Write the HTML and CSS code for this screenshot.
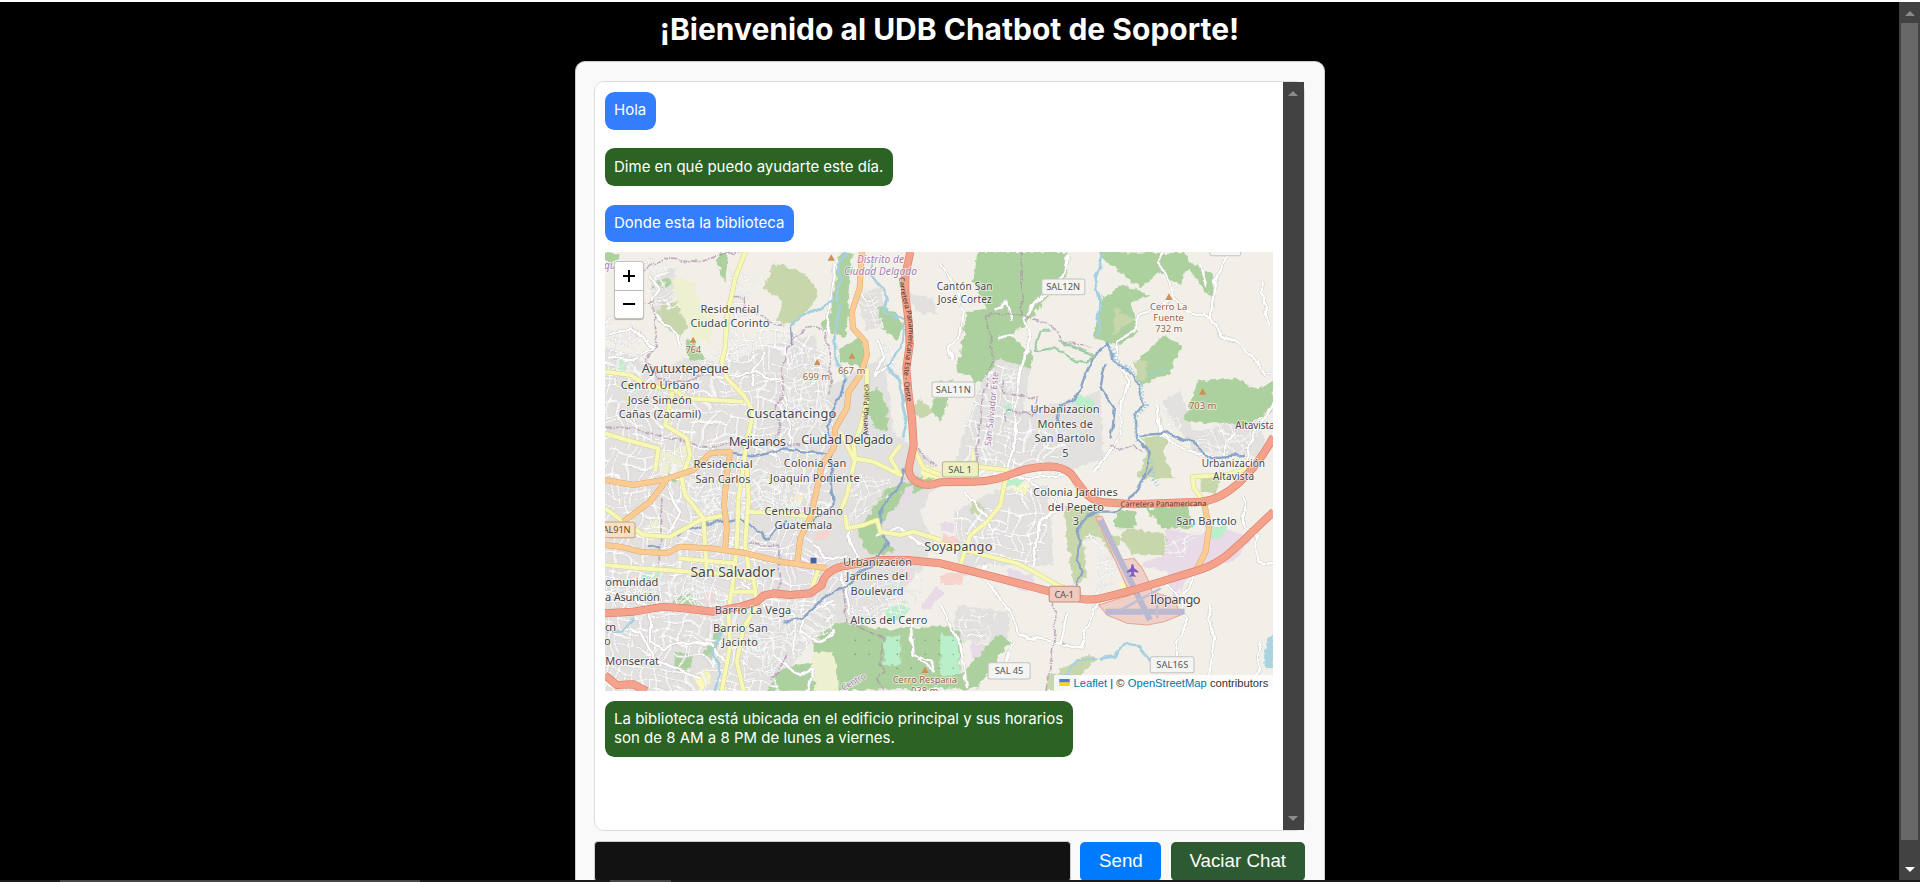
FILE: index.html
```
<!DOCTYPE html>
<html lang="es">
<head>
<meta charset="utf-8">
<title>UDB Chatbot de Soporte</title>
<link rel="stylesheet" href="styles.css">
</head>
<body>
<div class="screen">
<main class="page">
  <h1 class="title">¡Bienvenido al UDB Chatbot de Soporte!</h1>
  <section class="chat">
    <div class="chat-box">
      <div class="messages">
        <p class="bubble user">Hola</p>
        <p class="bubble bot">Dime en qué puedo ayudarte este día.</p>
        <p class="bubble user last">Donde esta la biblioteca</p>
        <div class="map">
          <svg class="tiles" viewBox="15 21 2004 1317" preserveAspectRatio="none">
            <defs>
              <filter id="warp" x="0" y="0" width="100%" height="100%"><feTurbulence type="fractalNoise" baseFrequency="0.009" numOctaves="2" seed="8"/><feDisplacementMap in="SourceGraphic" scale="90" xChannelSelector="R" yChannelSelector="G"/></filter>
              <filter id="edge" x="-5%" y="-5%" width="110%" height="110%"><feTurbulence type="fractalNoise" baseFrequency="0.05" numOctaves="2" seed="3"/><feDisplacementMap in="SourceGraphic" scale="22" xChannelSelector="R" yChannelSelector="G"/></filter>
              <filter id="wobble" x="-5%" y="-5%" width="110%" height="110%"><feTurbulence type="fractalNoise" baseFrequency="0.025" numOctaves="2" seed="5"/><feDisplacementMap in="SourceGraphic" scale="24" xChannelSelector="R" yChannelSelector="G"/></filter>
              <pattern id="grid" width="173" height="151" patternUnits="userSpaceOnUse" patternTransform="rotate(8)">
                <path d="M0 10H173M0 42H110M60 70H173M0 98H90M40 126H173M12 0V151M48 10V98M82 42V151M110 0V70M140 10V126M160 70V151M60 84H140M96 98V126M30 98V151M0 70H30" stroke="#c8c5c5" stroke-width="7.5" fill="none"/><path d="M0 10H173M0 42H110M60 70H173M0 98H90M40 126H173M12 0V151M48 10V98M82 42V151M110 0V70M140 10V126M160 70V151M60 84H140M96 98V126M30 98V151M0 70H30" stroke="#fff" stroke-width="4.8" fill="none"/>
              </pattern>
              <pattern id="fine" width="101" height="89" patternUnits="userSpaceOnUse" patternTransform="rotate(-17)"><path d="M0 8H101M0 22H60M0 36H101M30 52H101M0 66H70M8 0V89M34 8V66M60 22V89M84 0V52M22 66V89" stroke="#cbc9c8" stroke-width="5" fill="none"/><path d="M0 8H101M0 22H60M0 36H101M30 52H101M0 66H70M8 0V89M34 8V66M60 22V89M84 0V52M22 66V89" stroke="#fff" stroke-width="3.2" fill="none"/></pattern>
              <pattern id="trees" width="42" height="42" patternUnits="userSpaceOnUse"><circle cx="9" cy="10" r="2.5" fill="#6fa267"/></pattern>
              <path id="p1" d="M897 97C900 180 935 210 922 300S905 390 922 475"/>
              <path id="p2" d="M805 570C795 510 815 470 802 410"/>
            </defs>
            <rect class="land" x="0" y="0" width="2040" height="1360"/>
            <g filter="url(#edge)">
              <path class="urban" d="M0 300L110 340 180 380 250 340 370 360 500 300 640 270 700 420 850 330 880 560 990 640 1020 700 960 800 1000 900 960 980 840 1110 700 1140 620 1200 520 1338H0ZM150 110L230 60 215 170 170 210ZM1060 660L1140 420 1200 340 1290 370 1270 500 1500 440 1510 640 1400 680ZM1060 800L1180 740 1340 720 1360 960 1140 960 1080 1000ZM1680 470L1740 440 1780 560 1970 520 2000 640 1780 620ZM1070 1080L1230 1100 1220 1190 1060 1190ZM770 160L840 120 860 230 800 260ZM920 140L1000 160 1010 210 950 200Z"/>
              <path class="wood" d="M690 200L720 21 755 21 745 190 735 280 690 260 660 240ZM715 310L790 270 800 370 720 350ZM830 180L880 200 910 240 890 285 845 250ZM1130 21L1400 21 1400 90 1330 170 1290 215 1270 250 1230 270 1300 330 1290 375 1200 340 1140 415 1070 380 1080 320 1100 200 1160 190 1120 110ZM1490 21L1750 25 1780 60 1840 90 1835 165 1760 70 1740 120 1670 80 1620 130 1520 50ZM1500 160L1570 120 1650 150 1590 170 1610 260 1560 300 1480 280ZM1600 360L1690 270 1740 300 1710 380 1620 420ZM1750 530L1790 410 1900 400 1960 430 2019 410V490L1940 540ZM640 1180L700 1130 780 1140 880 1155 1020 1140 1080 1160 1080 1290 1190 1170 1230 1190 1130 1330 500 1338 540 1270 640 1250ZM830 420L865 500 860 560 820 540 790 480ZM850 740L1000 680 1020 690 880 790 830 850 880 920 810 930 770 860ZM1020 410L1060 405 1040 480 1020 530 990 500ZM360 21L385 21 375 110 350 60ZM195 95L215 110 200 130 150 130ZM1550 790L1610 800 1600 850 1540 850ZM1640 790L1760 780 1780 850 1680 850ZM250 285L290 300 320 345 270 350ZM195 630L240 640 230 710 190 700ZM220 1050L300 1045 290 1085 215 1085ZM220 1220L280 1230 260 1280 230 1290ZM370 1140L330 1180 310 1240 350 1260 360 1190ZM1800 880L1850 870 1850 940 1800 950ZM15 21L60 35 40 55 15 50Z"/>
              <path class="scrub" d="M520 55L580 70 640 110 650 165 580 240 530 230 550 170 490 130ZM180 180L245 165 270 230 240 280 165 220ZM1390 790L1500 780 1500 850 1560 880 1540 940 1500 880 1450 880 1460 1000 1420 1020 1400 900ZM1580 850L1700 870 1690 930 1600 930 1560 880ZM1620 580L1710 560 1690 620 1720 700 1610 700 1640 610ZM1340 1300L1460 1230 1490 1240 1400 1338H1340ZM1540 190L1600 220 1540 270ZM960 460L1000 500 960 520 930 500ZM1600 350L1640 350 1640 400 1610 410ZM1110 760L1160 790 1150 810 1110 800ZM1800 690L1860 700 1850 750 1800 740Z"/>
              <path class="pale" d="M220 95L280 110 300 180 350 200 330 300 280 280 240 200 220 150ZM640 1220L700 1225 720 1338H650L630 1270ZM130 850L180 820 190 860 150 890ZM175 620L260 600 260 690 180 690Z"/>
              <path class="industry" d="M1700 850L1780 870 1870 850 1950 880 1910 940 1780 980 1720 1060 1700 980 1620 960 1690 930ZM560 930L640 930 690 920 680 965 600 990 560 990ZM900 740L940 720 930 770 900 780ZM960 1090L1010 1020 1030 1040 990 1090ZM1220 970L1300 990 1290 1040 1220 1020ZM1110 1190L1160 1200 1130 1240 1110 1240ZM1020 830L1060 830 1060 860 1020 860Z"/>
              <path class="retail" d="M320 1035L350 1030 330 1080 310 1065ZM640 870L690 850 680 880 640 885ZM1020 990L1090 980 1080 1020 1020 1020ZM1030 870L1080 880 1070 920 1020 900Z"/>
              <path class="park" d="M120 990L180 980 170 1000 130 1010ZM1420 460L1440 450 1480 470 1480 500 1440 500ZM850 1100L920 1060 930 1100 880 1130ZM1220 690L1270 690 1260 720 1220 720ZM1830 850L1880 840 1860 880 1830 880ZM1020 1160L1070 1180 1080 1290 1020 1290ZM850 1180L900 1170 900 1260 850 1260ZM1215 480L1240 470 1230 510 1215 510ZM55 350L75 350 75 375 55 375Z"/>
              <path class="lemon" d="M570 760L610 750 600 780 570 790ZM300 520L330 530 310 550ZM1110 600L1130 640 1110 660ZM1240 720L1290 720 1270 750 1240 740ZM280 1300L320 1270 330 1310 300 1338ZM950 650L1010 670 1020 700 970 700ZM1550 1020L1590 1000 1580 1030Z"/>
              <path class="water" d="M2019 1170L2000 1180 1990 1240 2000 1270 2019 1260Z"/>
            </g>
            <path d="M730 1150H820V1240H730ZM850 1180H1060V1290H850Z" fill="url(#trees)"/>
            <g filter="url(#warp)">
              <path fill="url(#grid)" d="M0 250L110 300 140 400 280 370 380 300 510 230 660 280 700 360 670 600 700 700 640 900 760 1000 690 1130 560 1210 520 1360H0ZM1200 350L1260 380 1250 500 1400 540 1380 680 1080 700 1090 500ZM1050 810L1200 760 1320 720 1340 960 1180 970 1060 920Z"/>
              <path fill="url(#fine)" d="M390 60L470 100 420 330 360 330ZM560 330L700 300 700 560 560 560ZM720 700L860 700 870 760 740 860ZM250 700L380 700 380 860 250 820ZM420 670L660 680 620 820 420 820ZM30 1000L400 1010 380 1130 30 1120ZM400 1130L620 1070 700 1120 560 1270 430 1290ZM760 1020L960 980 900 1110 760 1130ZM1220 350L1270 380 1260 470 1220 460ZM1680 470L1730 460 1740 540 1690 530ZM1800 550L1990 540 1950 650 1800 610ZM1100 1090L1200 1100 1180 1180 1060 1170ZM1450 880L1480 860 1550 1020 1480 1050ZM1700 860L1780 860 1760 920 1700 920ZM770 130L850 110 850 250 790 230ZM30 320L120 340 110 400 30 380ZM140 70L230 40 210 190 160 180ZM1150 610L1210 660 1120 690ZM840 300L890 330 880 400 830 360ZM20 220L130 250 120 300 20 290Z"/>
            </g>
            <g filter="url(#wobble)">
            <g class="road-case"><path id="mr" d="M150 90L180 130 155 160 165 210 230 270 240 300M20 270L90 250 130 280 160 310 100 345 20 340M340 400L460 380 540 410 560 480 570 600M460 420L450 380 500 320M680 270L690 170 700 60M830 280L850 330 820 400 880 350M1020 55L1060 120 1090 200 1080 270 1040 310 1060 350M1400 30L1390 100 1330 150 1270 220 1290 290 1260 370 1250 450 1240 600 1220 670M1690 21L1670 50 1700 90 1710 150 1760 200 1830 215 1860 270 1930 310 1960 340 1990 390 2019 380M1830 220L1840 130 1860 50 1900 21M1710 170L1620 210 1600 260 1550 290 1550 350 1580 410 1560 480 1560 560 1530 620 1480 680M1985 100L1990 180 2010 240M1670 480L1680 570 1770 620 1850 640 1870 690M1900 560L1870 590 1870 650M2019 480L1960 560 1940 650M1270 700L1330 740 1370 760 1360 800 1320 820 1300 960M1090 740L1150 800 1180 860M1170 690L1290 700 1400 690 1450 740M1160 960L1140 990 1180 1030 1230 1100 1260 1170 1350 1190 1440 1210 1460 1150 1490 1070M1020 1080L1080 1200 1100 1330M1700 1010L1740 1070 1760 1120 1730 1190 1720 1300M1800 960L1750 1050M1930 750L1930 850 1970 880 1970 950 2019 960M1820 1080L1840 1180 1820 1338M1980 1190L1970 1290M930 1130L940 1230 990 1250 1000 1280 950 1240M15 1040L100 1055 150 1100 150 1190 190 1210 260 1190 340 1200 380 1260M60 1150L120 1160 160 1240 300 1300M700 1070L620 1100 600 1160 650 1190 700 1160M720 990L750 1110M740 820L750 890 770 930 740 960M640 900L680 940 740 930M830 870L900 850 960 900 1020 920M190 710L240 800 210 860M430 1010L500 1090 580 1110 580 1230M520 1230L600 1290 640 1270 620 1338M1180 200L1220 170 1230 230M1190 280L1240 270M1820 120L1800 60M1240 1190L1210 1260M1400 1100L1380 1200"/></g>
            <use href="#mr" class="road-white"/>
            <g class="streams">
              <path d="M575 245L600 220 670 180 710 165 720 100 710 60 740 21M720 180L705 260 710 350 740 400M820 30L815 90 860 150 850 200 910 230 900 310 860 360 890 400 905 470 920 530 905 580M1510 21L1485 100 1500 180 1490 270M1500 1240L1540 1235 1570 1200 1620 1200 1650 1250M1360 1290L1400 1290 1430 1250 1490 1240M370 1150L340 1210 360 1290 340 1338M100 1120L60 1160 20 1160"/>
              <path class="deep" d="M575 245L580 300M740 400L720 450 680 540 700 600 690 640 700 780 640 830M1480 330L1520 290 1540 350 1600 390 1630 480 1605 510 1610 580 1650 620 1630 700M1480 330L1450 400 1430 460 1380 480 1370 530M1515 355L1500 430 1540 490 1530 580M1620 570L1700 565 1770 590 1830 640 1930 633M915 670L900 720 840 790 840 850 860 890 820 960 730 1020 660 1070 610 1120 550 1130M345 620L460 635 560 610 680 625M230 870L310 840 420 820 500 880 560 830M140 900L180 910M1660 665L1580 770 1540 800 1480 800 1440 840 1430 920 1440 980 1420 1040"/>
            </g>
            <path class="bluehatch" d="M1525 300L1550 350 1610 390 1635 480 1605 520 1610 590M1640 390L1700 370M1650 640L1670 720"/>
            <g class="boundary"><path d="M90 100L190 40 300 50 360 30 435 21M60 180L160 170 170 300 140 350 170 400 260 410 310 390M400 155H430L430 190 530 240 550 245M560 310L540 400 550 440 525 490 540 560 520 600M560 310L610 250 650 245 690 300V450M20 550L100 550 210 580 330 610 420 590 600 600M185 760L180 960M440 895L540 905 535 1040M950 610L1010 670M725 1030L740 1130 850 1180 840 1230 850 1280 830 1300 850 1338M1350 1070L1370 1110 1340 1338M1265 21L1265 210M1155 210H1265L1350 240 1380 290 1470 310M1155 210L1180 340 1150 440 1130 600 1130 660M1205 410L1210 450 1310 460 1300 510 1220 500 1210 530M1530 600L1550 620 1600 600 1630 620M560 1230L520 1300"/></g>
            <path class="greenline" d="M1350 260L1320 260 1300 320 1360 310 1450 355 1480 330 1370 290"/>
            </g>
            <g class="yellow-case"><path id="yl" d="M435 21L405 100 380 220 375 310 365 350 380 400 430 450 460 500 440 590 430 660 415 760 410 900 400 1000 385 1100 390 1200 365 1338M15 380L90 390 150 425 220 430 255 460 430 470M218 440L195 540 260 580 270 630 245 700 255 750 310 820 315 900 320 980M15 565L80 585 175 610 165 680M15 790L70 830 130 870 210 875 300 825 380 810M15 960L120 970 340 985 460 1000 470 1080 430 1150 410 1250 430 1338M440 660L445 760 435 900 450 1000M235 940L400 955M390 1040H470M440 800L540 805 630 815M655 970L635 1030M800 370L800 470 780 550 760 600 765 640 740 750 720 800M720 560L760 640 820 650 900 690 870 640 900 600M735 810L740 850 790 840 830 825 840 860 900 870 940 860 1020 885M1020 895L1150 930 1250 955 1300 980 1370 1020 1440 1050M940 610L970 670 1020 690M1080 660L1220 675 1200 780 1160 830 1110 870 1080 960M1940 670L1880 690 1775 695 1780 730 1810 770"/></g>
            <use href="#yl" class="yellow"/>
            <g class="orange-case"><path id="or" d="M785 21L778 130 755 200 758 250 795 290 800 330 780 390 745 440 740 490 705 550 700 610 665 660 655 710 630 820 600 880 590 960M15 705L100 720 190 705 280 675 330 625 390 620 380 690 372 780 380 850 375 910M200 705L150 770 70 830M15 900L60 905 120 920 200 925 240 905 330 910 440 925 540 950 680 970M1810 770L1825 850 1815 920 1790 970"/></g>
            <use href="#or" class="orange"/>
            <path class="airport" d="M1485 815L1505 815 1565 945 1600 940 1625 970 1645 1010 1655 1040 1720 1060 1740 1110 1690 1130 1640 1140 1580 1135 1520 1110 1495 1080 1590 1050Z"/>
            <path class="runway" d="M1500 825L1648 1125M1515 1100H1752"/><path class="taxiway" d="M1670 1060V1120M1560 1095L1680 1030"/>
            <g class="red-case"><path id="rd" d="M930 21L915 90 915 150 925 230 928 300 918 370 925 450 935 520 940 600 925 670C925 710 970 732 1020 712L1120 710C1200 710 1240 680 1280 672S1375 655 1410 685C1450 735 1460 765 1510 772L1600 778 1800 770C1870 765 1950 700 2019 575M15 1105L100 1100 190 1085 250 1090 340 1100 420 1085 470 1070 490 1052 520 1045 570 1050 630 1045 665 1020C670 990 700 965 740 962L840 945H920L1020 955 1100 975 1350 1040C1430 1060 1460 1070 1500 1060L1600 1035 1780 980C1870 955 1890 920 2019 800M15 1290L50 1320 100 1318 140 1338"/></g>
            <use href="#rd" class="red"/>
            <g class="shield"><rect x="1324" y="102" width="129" height="47" rx="6"/><rect x="1828" y="0" width="92" height="32" rx="6"/><rect x="995" y="411" width="128" height="46" rx="6"/><rect x="1163" y="1253" width="126" height="49" rx="6"/><rect x="1649" y="1235" width="131" height="48" rx="6"/></g>
            <rect x="1026" y="650" width="108" height="46" rx="6" fill="#eef0c2" stroke="#b8b887" stroke-width="3"/>
            <rect x="1346" y="1024" width="93" height="47" rx="6" fill="#f1cabf" stroke="#c58c7d" stroke-width="3"/>
            <rect x="-10" y="831" width="115" height="47" rx="6" fill="#f8dfc8" stroke="#c9a077" stroke-width="3"/>
            <rect x="631" y="938" width="18" height="17" fill="#4163a3"/>
            <path class="peak" d="M279 275l10 18h-20zM651 342l10 18h-20zM755 323l10 18h-20zM693 28l11 19h-22zM1705 145l11 20h-22zM1806 429l11 20h-22zM974 1265l11 19h-22z"/>
            <path fill="#7d5cc4" d="M1593 958h5l3 12 12 9v4l-13-3v8l5 5v3l-9-2-9 2v-3l5-5v-8l-13 3v-4l12-9z"/>
            <g class="label">
              <text x="301" y="204" textLength="176">Residencial</text><text x="271" y="247" textLength="237">Ciudad Corinto</text>
              <text class="lg" x="125" y="384" textLength="261">Ayutuxtepeque</text>
              <text x="62" y="432" textLength="236">Centro Urbano</text><text x="83" y="476" textLength="192">José Simeón</text><text x="56" y="520" textLength="247">Cañas (Zacamil)</text>
              <text class="lg" x="438" y="519" textLength="270">Cuscatancingo</text><text class="lg" x="386" y="603" textLength="171">Mejicanos</text><text class="lg" x="603" y="597" textLength="275">Ciudad Delgado</text>
              <text x="280" y="669" textLength="177">Residencial</text><text x="286" y="713" textLength="165">San Carlos</text>
              <text x="551" y="667" textLength="187">Colonia San</text><text x="509" y="711" textLength="269">Joaquín Poniente</text>
              <text x="493" y="809" textLength="235">Centro Urbano</text><text x="523" y="853" textLength="173">Guatemala</text>
              <text class="xl" x="271" y="997" textLength="254">San Salvador</text>
              <text x="16" y="1023" textLength="159">omunidad</text><text x="15" y="1067" textLength="164">a Asunción</text>
              <text x="344" y="1107" textLength="229">Barrio La Vega</text><text x="339" y="1160" textLength="164">Barrio San</text><text x="366" y="1204" textLength="107">Jacinto</text>
              <text x="15" y="1158" textLength="33">on</text><text x="12" y="1201">o</text><text x="16" y="1261" textLength="161">Monserrat</text>
              <text x="728" y="963" textLength="207">Urbanización</text><text x="738" y="1006" textLength="185">Jardines del</text><text x="751" y="1049" textLength="159">Boulevard</text>
              <text x="750" y="1136" textLength="231">Altos del Cerro</text>
              <text class="lg" x="972" y="917" textLength="204">Soyapango</text>
              <text class="md" x="1009" y="136" textLength="167">Cantón San</text><text class="md" x="1012" y="175" textLength="162">José Cortez</text>
              <text x="1290" y="504" textLength="207">Urbanizacion</text><text x="1311" y="548" textLength="166">Montes de</text><text x="1302" y="592" textLength="182">San Bartolo</text><text x="1385" y="636">5</text>
              <text class="md" x="1904" y="553" textLength="118">Altavista</text><text class="md" x="1803" y="665" textLength="190">Urbanización</text><text class="md" x="1837" y="704" textLength="123">Altavista</text>
              <text x="1298" y="753" textLength="254">Colonia Jardines</text><text x="1342" y="797" textLength="168">del Pepeto</text><text x="1417" y="841">3</text>
              <text x="1727" y="841" textLength="181">San Bartolo</text><text class="lg" x="1648" y="1078" textLength="152">Ilopango</text>
            </g>
            <g class="label code">
              <text x="1337" y="136" textLength="102">SAL12N</text><text x="1006" y="445" textLength="105">SAL11N</text><text x="1044" y="683" textLength="70">SAL 1</text><text x="1362" y="1058" textLength="58">CA-1</text><text x="1183" y="1288" textLength="86">SAL 45</text><text x="1667" y="1269" textLength="96">SAL16S</text><text class="brown" x="8" y="864" textLength="84">AL91N</text>
            </g>
            <g class="label small">
              <text x="256" y="323" textLength="47">764</text><text x="608" y="404" textLength="82">699 m</text><text x="713" y="386" textLength="82">667 m</text>
              <text x="1648" y="195" textLength="112">Cerro La</text><text x="1658" y="228" textLength="92">Fuente</text><text x="1664" y="262" textLength="81">732 m</text><text x="1765" y="492" textLength="82">703 m</text><text x="877" y="1315" textLength="193">Cerro Resparia</text><text x="932" y="1347" textLength="82">938 m</text>
            </g>
            <g class="label district">
              <text x="770" y="54" textLength="141">Distrito de</text><text x="731" y="91" textLength="219">Ciudad Delgado</text><text x="12" y="71">qu</text>
              <text class="up" textLength="224" transform="translate(1171 604) rotate(-84)">San Salvador Este</text><text class="up" transform="translate(730 1338) rotate(-30)" textLength="80">Centro</text>
            </g>
            <g class="label street">
              <text><textPath href="#p1" textLength="378">Carretera Panamericana Este - Oeste</textPath></text>
              <text><textPath href="#p2" textLength="155">Avenida Paleca</textPath></text>
              <text x="1560" y="785" textLength="257" transform="rotate(-.4 1560 785)">Carretera Panamericana</text>
            </g>
          </svg>
          <div class="zoom">
            <span class="zoom-btn"><svg viewBox="0 0 12 12"><path d="M0 6H12M6 0V12"/></svg></span>
            <span class="zoom-btn"><svg viewBox="0 0 12 12"><path d="M0 6H12"/></svg></span>
          </div>
          <div class="credit"><svg class="flag" viewBox="0 0 12 8"><path fill="#4c7be1" d="M0 0h12v4H0z"/><path fill="#ffd500" d="M0 4h12v4H0z"/></svg><span class="link">Leaflet</span><span>|</span><span>©</span><span class="link">OpenStreetMap</span><span>contributors</span></div>
        </div>
        <p class="bubble bot wide">La biblioteca está ubicada en el edificio principal y sus horarios<br>son de 8 AM a 8 PM de lunes a viernes.</p>
      </div>
      <div class="scroll"><i class="arrow up-arrow"></i><i class="arrow down-arrow"></i></div>
    </div>
    <div class="controls">
      <input class="field" type="text" aria-label="Mensaje">
      <button class="btn send">Send</button>
      <button class="btn clear">Vaciar Chat</button>
    </div>
  </section>
</main>
<aside class="scroll page-scroll"><i class="arrow up-arrow"></i><div class="thumb"></div><i class="arrow down-arrow lit"></i></aside>
</div>
<footer class="strip"><i class="tab"></i><i class="tab-small"></i></footer>
</body>
</html>
```
FILE: styles.css
```
* { box-sizing: border-box; }
body { margin: 0; height: 882px; overflow: hidden; background: #000; border-top: 2px solid #fff; font-family: Inter, sans-serif; display: flex; flex-direction: column; }
.screen { height: 878px; display: flex; overflow: hidden; }
.page { flex: 1; display: flex; flex-direction: column; align-items: center; }
.title { flex: none; margin: 0; height: 59px; padding-top: 9px; font-size: 30px; line-height: 36px; font-weight: 700; color: #fff; white-space: nowrap; }
.chat { width: 750px; flex: 0 0 900px; padding: 18.75px; background: #f9f9f9; border: 1px solid #ccc; border-radius: 10px; }
.chat-box { height: 750px; display: flex; background: #fff; border: 1px solid #ddd; border-radius: 10px; }
.messages { flex: 1; padding: 10.3px 9.4px; display: flex; flex-direction: column; align-items: flex-start; }
.bubble { margin: 0 0 18.75px; padding: 9.4px; border-radius: 9.4px; font-size: 15px; line-height: 18.75px; color: #fff; white-space: nowrap; }
.bubble.last { margin-bottom: 9.6px; }
.user { background: #337eff; }
.bot { background: #2a6323; }
.bubble.wide { margin-top: 9.8px; }
.map { position: relative; align-self: stretch; height: 439px; flex: none; overflow: hidden; }
.tiles { display: block; width: 100%; height: 100%; font-family: "Noto Sans", sans-serif; }
.zoom { position: absolute; left: 9px; top: 9px; width: 30px; border: 1px solid #c4c3c0; border-radius: 3px; background: #fff; box-shadow: 0 1px 1px rgba(0,0,0,.25); }
.zoom-btn { height: 28px; display: flex; align-items: center; justify-content: center; }
.zoom-btn + .zoom-btn { border-top: 1px solid #bbb; }
.zoom-btn svg { width: 12px; height: 12px; stroke: #000; stroke-width: 2; }
.credit { position: absolute; right: 0; bottom: 0; height: 16px; width: 219px; padding: 0 5px; display: flex; align-items: center; justify-content: space-between; background: rgba(255,255,255,.82); color: #333; font: 11.2px/16px "Liberation Sans", Arial, sans-serif; }
.link { color: #0078a8; }
.flag { width: 11px; height: 7px; }
.scroll { width: 21px; background: #424242; display: flex; flex-direction: column; align-items: center; justify-content: space-between; padding: 9px 0; }
.arrow { width: 0; height: 0; border: 5px solid transparent; flex: none; }
.up-arrow { border-top: 0; border-bottom-color: #8a8a8a; }
.down-arrow { border-bottom: 0; border-top-color: #8a8a8a; }
.lit { border-top-color: #fff; }
.page-scroll { padding-bottom: 8px; }
.thumb { width: 17px; height: 817px; margin: 7px 0 auto; background: #686868; }
.controls { display: flex; gap: 9.4px; margin-top: 10px; align-items: flex-start; }
.field { flex: 1; min-width: 0; height: 41px; background: #121212; border: 1px solid #ccc; border-radius: 4px; }
.btn { margin-top: 1px; height: 39px; border: 0; padding: 0; border-radius: 5px; color: #fff; font: 18.75px "Liberation Sans", Arial, sans-serif; }
.send { width: 81px; background: #007bff; }
.clear { width: 134px; background: #2d5a30; }
.strip { height: 2px; display: flex; background: #1c1a1b; padding-left: 60px; gap: 190px; }
.tab { width: 360px; background: #474747; }
.tab-small { width: 61px; background: #474747; }
.land { fill: #f2efe9; }
.urban { fill: #e3e1df; }
.wood { fill: #add19e; }
.scrub { fill: #c8d7ab; }
.pale { fill: #edf0d1; }
.industry { fill: #e8dae7; }
.retail { fill: #f6d4cd; }
.park { fill: #b9f0cb; }
.lemon { fill: #fcf9b9; }
.water { fill: #aad3df; }
.road-case, .road-white, .yellow-case, .yellow, .orange-case, .orange, .red-case, .red, .streams, .boundary, .greenline, .runway, .taxiway, .bluehatch { fill: none; stroke-linejoin: round; }
.road-case { stroke: #c9c6c4; stroke-width: 10; }
.road-white { stroke: #fff; stroke-width: 7; }
.streams { stroke: #a6d0e0; stroke-width: 8; }
.deep { stroke: #8ba5c6; stroke-width: 7; }
.bluehatch { stroke: #9ccbe0; stroke-width: 14; stroke-dasharray: 3 7; }
.boundary { stroke: #ad8cab; stroke-opacity: .7; stroke-width: 5; stroke-dasharray: 16 4 5 4; }
.greenline { stroke: #9fcba5; stroke-width: 6; }
.yellow-case { stroke: #d6d38c; stroke-width: 15; }
.yellow { stroke: #f7f8b5; stroke-width: 12; }
.orange-case { stroke: #dda86b; stroke-width: 18; }
.orange { stroke: #fbcb94; stroke-width: 15; }
.red-case { stroke: #e07f68; stroke-width: 24; }
.red { stroke: #f4a28c; stroke-width: 20; }
.airport { fill: #efd0c8; stroke: #e8a493; stroke-width: 3; }
.runway { stroke: #bbb9cf; stroke-width: 18; }
.taxiway { stroke: #c4c0d2; stroke-width: 8; }
.shield { fill: #f4f4f2; stroke: #c2c2c0; stroke-width: 3; }
.peak { fill: #d08f55; }
.label { fill: #484848; font-size: 33px; stroke: #fff; stroke-opacity: .7; stroke-width: 5px; paint-order: stroke; }
.lg { font-size: 38.5px; }
.xl { font-size: 42px; }
.md { font-size: 30px; }
.code { font-size: 28px; fill: #555; stroke: none; }
.brown { fill: #734a08; }
.small { font-size: 28.5px; fill: #9c6140; }
.district { font-size: 30.5px; font-style: italic; fill: #a87cab; }
.up { font-size: 27px; font-style: normal; }
.street { font-size: 22px; fill: #4b3530; stroke: none; }
```
